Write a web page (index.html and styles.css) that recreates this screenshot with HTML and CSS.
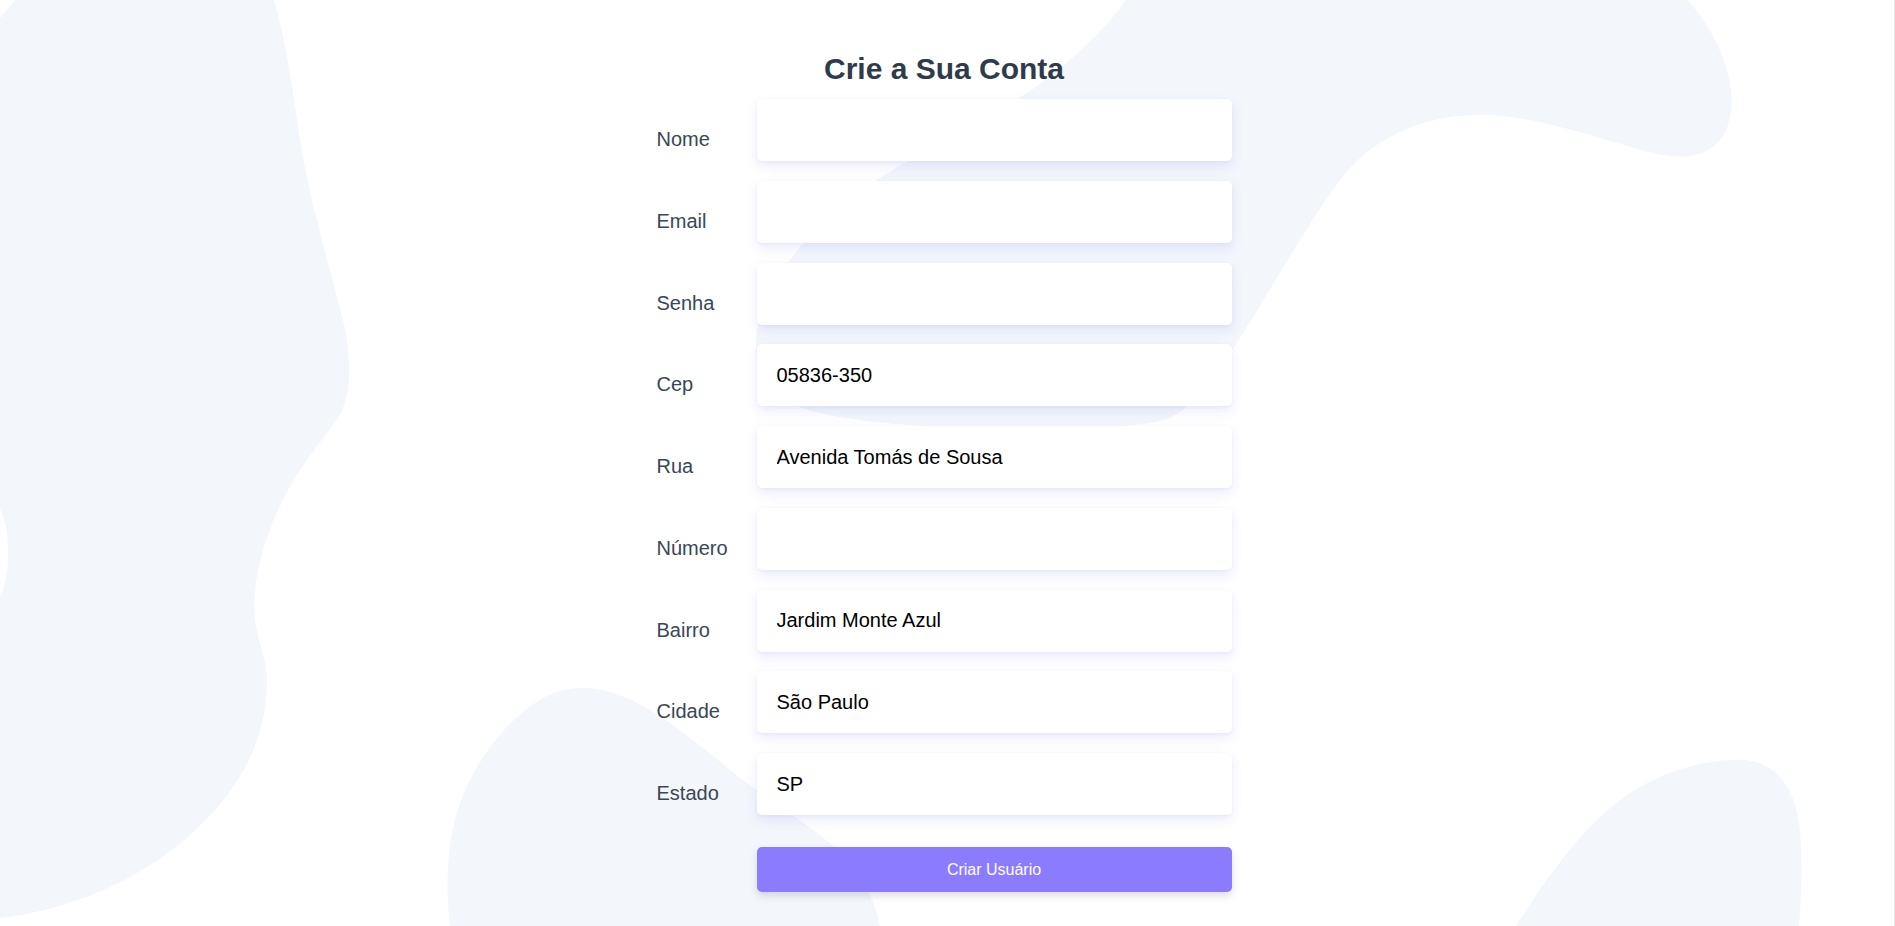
FILE: index.html
```html
<!DOCTYPE html>
<html lang="pt-BR">
<head>
<meta charset="utf-8">
<title>Crie a Sua Conta</title>
<link rel="stylesheet" href="styles.css">
</head>
<body>
<div class="page">
  <svg class="bg" viewBox="0 0 1895 926" width="1895" height="926" aria-hidden="true">
    <path class="blob" d="M15,0 L274,0 C283,30 292,80 300,140 C310,200 330,270 343,320 C352,360 352,395 338,418 C325,437 300,465 283,500 C262,540 250,590 256,625 C259,645 267,660 267,680 C267,740 240,790 190,835 C140,880 70,910 0,918 L0,597 C6,585 9,565 8,550 C8,535 5,518 0,508 L0,18 Z"/>
    <path class="blob" d="M450,926 C444,880 448,820 470,780 C490,740 520,710 545,697 C565,686 595,684 625,697 C660,712 700,745 740,778 C790,815 835,840 855,870 C870,890 877,910 880,926 Z"/>
    <path class="blob" d="M1126,0 C1105,30 1060,75 1000,110 C960,132 910,158 877,180 C830,212 790,250 768,295 C752,330 750,370 775,395 C810,420 900,427 1000,428 C1080,429 1140,428 1170,418 C1195,405 1215,375 1240,338 C1270,292 1300,235 1340,180 C1370,140 1420,116 1475,115 C1520,113 1580,132 1640,150 C1680,161 1705,158 1720,140 C1740,115 1735,65 1700,15 L1688,0 Z"/>
    <path class="blob" d="M1516,926 C1545,880 1580,830 1620,800 C1660,770 1710,758 1745,760 C1775,763 1795,785 1800,830 C1803,870 1801,900 1799,926 Z"/>
  </svg>
  <main class="wrap">
    <form class="form">
      <h1 class="title">Crie a Sua Conta</h1>
      <div class="rows">
        <div class="row"><label class="label" for="nome">Nome</label><input class="field" id="nome" type="text"></div>
        <div class="row"><label class="label" for="email">Email</label><input class="field" id="email" type="email"></div>
        <div class="row"><label class="label" for="senha">Senha</label><input class="field" id="senha" type="password"></div>
        <div class="row"><label class="label" for="cep">Cep</label><input class="field" id="cep" type="text" value="05836-350"></div>
        <div class="row"><label class="label" for="rua">Rua</label><input class="field" id="rua" type="text" value="Avenida Tomás de Sousa"></div>
        <div class="row"><label class="label" for="numero">Número</label><input class="field" id="numero" type="text"></div>
        <div class="row"><label class="label" for="bairro">Bairro</label><input class="field" id="bairro" type="text" value="Jardim Monte Azul"></div>
        <div class="row"><label class="label" for="cidade">Cidade</label><input class="field" id="cidade" type="text" value="São Paulo"></div>
        <div class="row"><label class="label" for="estado">Estado</label><input class="field" id="estado" type="text" value="SP"></div>
      </div>
      <div class="actions"><button class="btn" type="button">Criar Usuário</button></div>
    </form>
  </main>
</div>
</body>
</html>
```

FILE: styles.css
```css
html, body {
  margin: 0;
  height: 100%;
  overflow: hidden;
  background: #ffffff;
}

.page {
  position: relative;
  height: 926px;
  box-sizing: border-box;
  border-right: 1px solid #e6e6e6;
  font-family: "Liberation Sans", Arial, sans-serif;
}

.bg {
  position: absolute;
  left: 0;
  top: 0;
  z-index: 0;
}

.blob {
  fill: #f3f6fb;
}

.wrap {
  position: relative;
  z-index: 1;
  display: flex;
  justify-content: center;
  padding: 51px 6px 0 0;
}

.form {
  width: 575px;
  display: flex;
  flex-direction: column;
  margin: 0;
}

.title {
  margin: 0 0 12px;
  font-size: 30px;
  line-height: 36px;
  font-weight: 700;
  color: #2f3b4c;
  text-align: center;
}

.rows {
  display: flex;
  flex-direction: column;
  gap: 19.75px;
}

.row {
  display: flex;
  align-items: flex-start;
}

.label {
  width: 100px;
  flex: none;
  padding-top: 29px;
  font-size: 20px;
  line-height: 23px;
  color: #3b4656;
}

.field {
  flex: 1;
  min-width: 0;
  height: 62px;
  box-sizing: border-box;
  border: 0;
  border-radius: 5px;
  background: #ffffff;
  padding: 0 20px;
  font-family: "Liberation Sans", Arial, sans-serif;
  font-size: 20px;
  color: #000000;
  outline: none;
  box-shadow: 0 5px 12px rgba(99, 102, 241, 0.13), 0 1px 3px rgba(99, 102, 241, 0.06);
}

.actions {
  margin-top: 32px;
  padding-left: 100px;
}

.btn {
  display: block;
  width: 100%;
  height: 45px;
  border: 0;
  border-radius: 5px;
  background: #8b7bff;
  color: #ffffff;
  font-family: "Liberation Sans", Arial, sans-serif;
  font-size: 16px;
  box-shadow: 0 4px 8px rgba(0, 0, 0, 0.13);
  cursor: pointer;
}
```
